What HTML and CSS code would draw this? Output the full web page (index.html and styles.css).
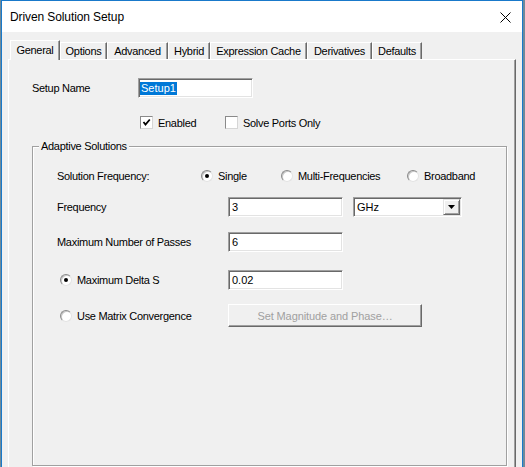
FILE: index.html
```html
<!DOCTYPE html>
<html>
<head>
<meta charset="utf-8">
<link rel="stylesheet" href="styles.css">
</head>
<body>
<div class="window">
  <div class="titlebar">
    <span class="title">Driven Solution Setup</span>
    <svg class="close" width="11" height="11" viewBox="0 0 11 11"><path d="M0.5 0.5 L10.5 10.5 M10.5 0.5 L0.5 10.5" stroke="#000" stroke-width="1" fill="none"/></svg>
  </div>
  <div class="client">
    <div class="tabs">
      <div class="tab active t-general">General</div>
      <div class="tab t-options">Options</div>
      <div class="tab t-advanced">Advanced</div>
      <div class="tab t-hybrid">Hybrid</div>
      <div class="tab t-expr">Expression Cache</div>
      <div class="tab t-deriv">Derivatives</div>
      <div class="tab t-defaults">Defaults</div>
    </div>
    <div class="panel">
      <div class="setup-row">
        <span class="lbl setup-lbl">Setup Name</span>
        <div class="field setup-field"><span class="sel">Setup1</span></div>
      </div>
      <div class="checks">
        <div class="check c-enabled">
          <span class="box"><svg width="9" height="9" viewBox="0 0 9 9"><path d="M1.5 4 L3.5 6.5 L7.8 1.5" stroke="#000" stroke-width="1.8" fill="none"/></svg></span>
          <span class="lbl">Enabled</span>
        </div>
        <div class="check">
          <span class="box"></span>
          <span class="lbl">Solve Ports Only</span>
        </div>
      </div>
      <div class="group">
        <div class="group-title">Adaptive Solutions</div>
        <div class="row r1">
          <span class="lbl freq-lbl">Solution Frequency:</span>
          <div class="opt o-single"><span class="radio on"></span><span class="lbl">Single</span></div>
          <div class="opt o-multi"><span class="radio"></span><span class="lbl">Multi-Frequencies</span></div>
          <div class="opt"><span class="radio"></span><span class="lbl">Broadband</span></div>
        </div>
        <div class="row r2">
          <span class="lbl col-lbl">Frequency</span>
          <div class="field val-field">3</div>
          <div class="select">
            <span class="select-text">GHz</span>
            <span class="drop"><svg width="7" height="4" viewBox="0 0 7 4"><path d="M0 0 H7 L3.5 4 Z" fill="#000"/></svg></span>
          </div>
        </div>
        <div class="row r3">
          <span class="lbl col-lbl">Maximum Number of Passes</span>
          <div class="field val-field">6</div>
        </div>
        <div class="row r4">
          <div class="opt o-side"><span class="radio on"></span><span class="lbl">Maximum Delta S</span></div>
          <div class="field val-field">0.02</div>
        </div>
        <div class="row r5">
          <div class="opt o-side"><span class="radio"></span><span class="lbl">Use Matrix Convergence</span></div>
          <div class="button">Set Magnitude and Phase…</div>
        </div>
      </div>
    </div>
  </div>
</div>
</body>
</html>
```

FILE: styles.css
```css
html, body {
  margin: 0;
  padding: 0;
}
body {
  width: 525px;
  height: 467px;
  overflow: hidden;
  background: #6f8a9a;
  font-family: "Liberation Sans", Arial, sans-serif;
  color: #000;
}
.window {
  margin-left: 1px;
  width: 520px;
  height: 500px;
  border: 1px solid #1979ca;
  border-bottom: none;
  background: #f0f0f0;
}
.titlebar {
  height: 31px;
  background: #fff;
  display: flex;
  align-items: center;
  padding-left: 8px;
}
.title {
  font-size: 12px;
  letter-spacing: -0.1px;
}
.close {
  margin-left: auto;
  margin-right: 11px;
  margin-top: 1px;
}
.client {
  padding: 8px 6px 0 6px;
}
.tabs {
  display: flex;
  align-items: flex-end;
  padding-left: 2px;
  height: 19px;
}
.tab {
  box-sizing: border-box;
  height: 17px;
  border-top: 1px solid #fff;
  border-left: 1px solid #fff;
  border-right: 1px solid #696969;
  box-shadow: inset -1px 0 0 #a0a0a0;
  display: flex;
  align-items: center;
  justify-content: center;
  font-size: 11px;
  letter-spacing: -0.3px;
  background: #f0f0f0;
}
.tab.active {
  height: 20px;
  margin-bottom: -1px;
  padding-bottom: 2px;
  position: relative;
  z-index: 1;
}
.t-general { width: 50px; }
.t-options { width: 47px; }
.t-advanced { width: 61px; }
.t-hybrid { width: 42px; }
.t-expr { width: 97px; }
.t-deriv { width: 65px; }
.t-defaults { width: 50px; }

.panel {
  box-sizing: border-box;
  height: 440px;
  border-top: 1px solid #fff;
  border-left: 1px solid #fff;
  border-right: 1px solid #696969;
  box-shadow: inset -1px 0 0 #a0a0a0;
  padding-left: 23px;
  padding-top: 18px;
}
.lbl {
  font-size: 11px;
  letter-spacing: -0.3px;
  white-space: nowrap;
}
.setup-row {
  display: flex;
  align-items: center;
  height: 20px;
}
.setup-lbl {
  width: 106px;
}
.field {
  box-sizing: border-box;
  height: 20px;
  background: #fff;
  border: 1px solid;
  border-color: #a0a0a0 #fff #fff #a0a0a0;
  box-shadow: inset 1px 1px 0 #696969, inset -1px -1px 0 #e3e3e3;
  font-size: 11px;
  display: flex;
  align-items: center;
  padding-left: 3px;
}
.setup-field {
  width: 115px;
  padding-left: 1px;
}
.sel {
  background: #0078d7;
  color: #fff;
  line-height: 13px;
  padding: 0 1px;
}
.checks {
  display: flex;
  align-items: center;
  height: 13px;
  margin-top: 18px;
  padding-left: 108px;
}
.check {
  display: flex;
  align-items: center;
  gap: 5px;
}
.c-enabled {
  width: 85px;
}
.box {
  box-sizing: border-box;
  width: 13px;
  height: 13px;
  background: #fff;
  border: 1px solid;
  border-color: #8a8a8a #d6d6d6 #d6d6d6 #8a8a8a;
  display: flex;
  align-items: center;
  justify-content: center;
}
.group {
  box-sizing: border-box;
  width: 475px;
  height: 320px;
  margin-top: 17px;
  border: 1px solid #a0a0a0;
  box-shadow: 1px 1px 0 #fff, inset 1px 1px 0 #fff;
  padding-left: 24px;
}
.group-title {
  display: table;
  margin: -7px 0 0 -18px;
  padding: 0 2px;
  background: #f0f0f0;
  font-size: 11px;
  line-height: 13px;
  letter-spacing: -0.3px;
}
.row {
  display: flex;
  align-items: center;
  height: 20px;
}
.r1 { margin-top: 13px; }
.r2 { margin-top: 11px; }
.r3 { margin-top: 15px; }
.r4 { margin-top: 18px; }
.r5 { margin-top: 14px; height: 23px; }
.freq-lbl { width: 144px; }
.col-lbl { width: 171px; }
.opt {
  display: flex;
  align-items: center;
  gap: 5px;
}
.o-single { width: 80px; }
.o-multi { width: 126px; }
.o-side {
  width: 168px;
  margin-left: 3px;
}
.radio {
  box-sizing: border-box;
  width: 12px;
  height: 12px;
  border-radius: 50%;
  background: #fff;
  border: 1px solid;
  border-color: #8a8a8a #e3e3e3 #e3e3e3 #8a8a8a;
  box-shadow: inset 1px 1px 0 #c8c8c8;
  display: flex;
  align-items: center;
  justify-content: center;
}
.radio.on::after {
  content: "";
  width: 4px;
  height: 4px;
  border-radius: 50%;
  background: #000;
}
.val-field {
  width: 115px;
}
.select {
  box-sizing: border-box;
  width: 109px;
  height: 20px;
  margin-left: 10px;
  background: #fff;
  border: 1px solid;
  border-color: #a0a0a0 #fff #fff #a0a0a0;
  box-shadow: inset 1px 1px 0 #696969, inset -1px -1px 0 #e3e3e3;
  display: flex;
  align-items: center;
  padding: 1px 1px 1px 3px;
  font-size: 11px;
}
.select-text {
  flex: 1;
}
.drop {
  box-sizing: border-box;
  width: 17px;
  height: 16px;
  background: #f0f0f0;
  border: 1px solid;
  border-color: #e3e3e3 #696969 #696969 #e3e3e3;
  box-shadow: inset 1px 1px 0 #fff, inset -1px -1px 0 #a0a0a0;
  display: flex;
  align-items: center;
  justify-content: center;
}
.button {
  box-sizing: border-box;
  width: 194px;
  height: 23px;
  background: #f0f0f0;
  border: 1px solid;
  border-color: #fff #696969 #696969 #fff;
  box-shadow: inset -1px -1px 0 #a0a0a0;
  display: flex;
  align-items: center;
  justify-content: center;
  font-size: 11px;
  color: #a0a0a0;
  letter-spacing: -0.1px;
}
```
